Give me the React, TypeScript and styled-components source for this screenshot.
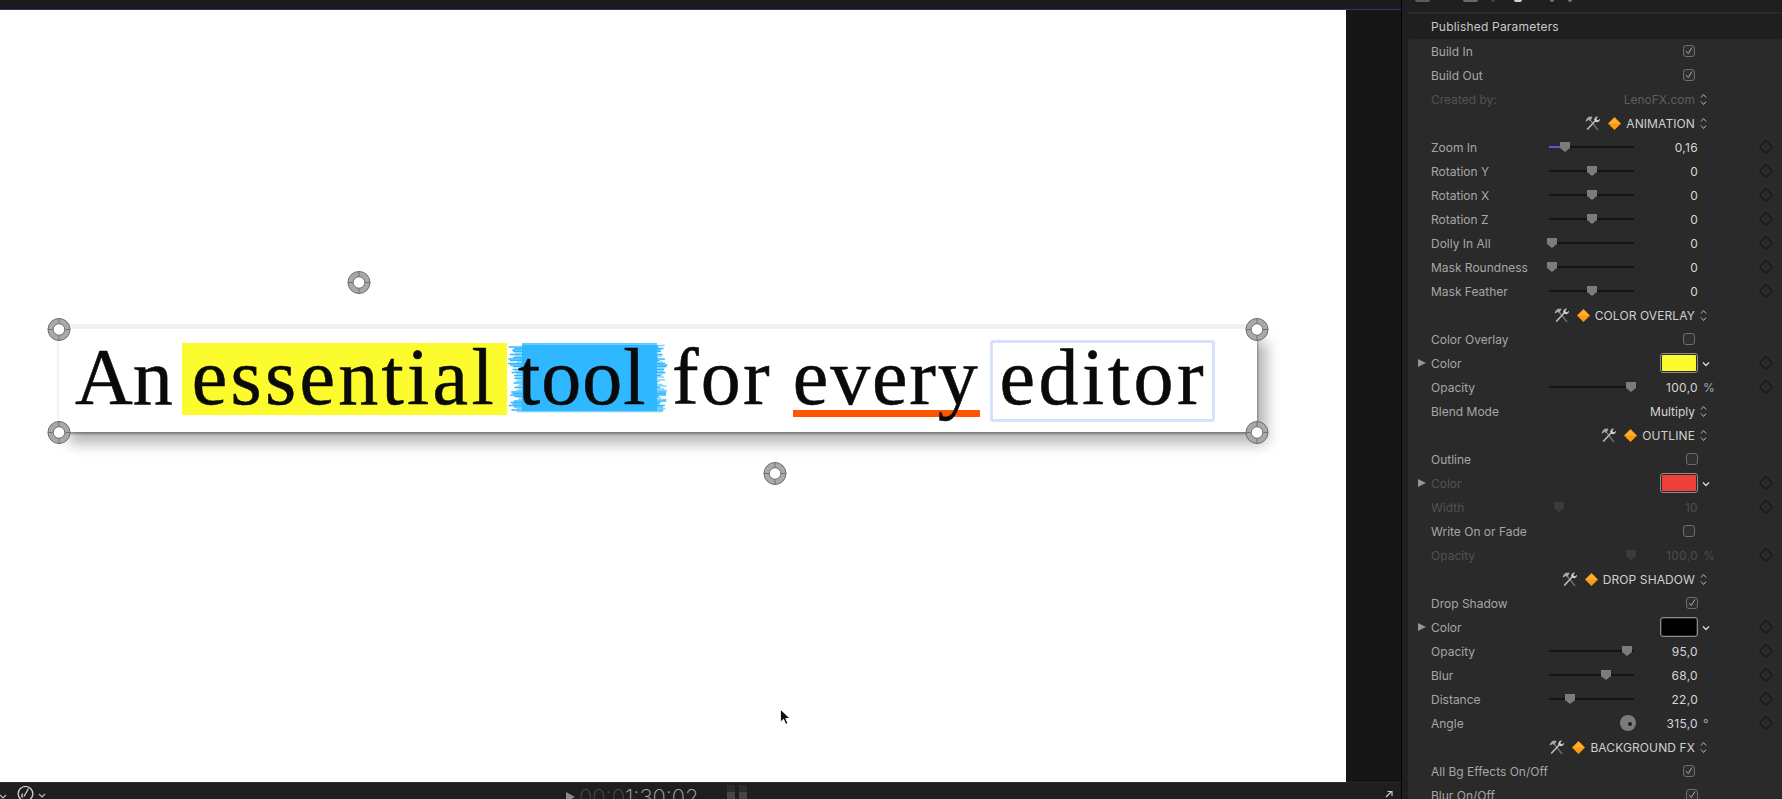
import React from "react";
import styled, { createGlobalStyle } from "styled-components";

const GlobalStyle = createGlobalStyle`
  html, body {
    margin: 0;
    padding: 0;
    background: #161616;
    overflow: hidden;
  }
`;

type RowData =
  | { kind: "check"; label: string; on: boolean; shifted?: boolean; dim?: boolean }
  | { kind: "popup"; label: string; value: string; dim?: boolean }
  | { kind: "section"; label: string }
  | { kind: "slider"; label: string; thumb: number; value: string; unit?: string; fill?: boolean; dim?: boolean; noTrack?: boolean }
  | { kind: "swatch"; label: string; color: string; dim?: boolean }
  | { kind: "angle"; label: string; value: string; unit: string };

const rows: RowData[] = [
  { kind: "check", label: "Build In", on: true },
  { kind: "check", label: "Build Out", on: true },
  { kind: "popup", label: "Created by:", value: "LenoFX.com", dim: true },
  { kind: "section", label: "ANIMATION" },
  { kind: "slider", label: "Zoom In", thumb: 16, value: "0,16", fill: true },
  { kind: "slider", label: "Rotation Y", thumb: 43, value: "0" },
  { kind: "slider", label: "Rotation X", thumb: 43, value: "0" },
  { kind: "slider", label: "Rotation Z", thumb: 43, value: "0" },
  { kind: "slider", label: "Dolly In All", thumb: 3, value: "0" },
  { kind: "slider", label: "Mask Roundness", thumb: 3, value: "0" },
  { kind: "slider", label: "Mask Feather", thumb: 43, value: "0" },
  { kind: "section", label: "COLOR OVERLAY" },
  { kind: "check", label: "Color Overlay", on: false },
  { kind: "swatch", label: "Color", color: "#fbfb2e" },
  { kind: "slider", label: "Opacity", thumb: 82, value: "100,0", unit: "%" },
  { kind: "popup", label: "Blend Mode", value: "Multiply" },
  { kind: "section", label: "OUTLINE" },
  { kind: "check", label: "Outline", on: false, shifted: true },
  { kind: "swatch", label: "Color", color: "#ee3f38", dim: true },
  { kind: "slider", label: "Width", thumb: 10, value: "10", dim: true, noTrack: true },
  { kind: "check", label: "Write On or Fade", on: false },
  { kind: "slider", label: "Opacity", thumb: 82, value: "100,0", unit: "%", dim: true, noTrack: true },
  { kind: "section", label: "DROP SHADOW" },
  { kind: "check", label: "Drop Shadow", on: true, shifted: true },
  { kind: "swatch", label: "Color", color: "#000000" },
  { kind: "slider", label: "Opacity", thumb: 78, value: "95,0" },
  { kind: "slider", label: "Blur", thumb: 57, value: "68,0" },
  { kind: "slider", label: "Distance", thumb: 21, value: "22,0" },
  { kind: "angle", label: "Angle", value: "315,0", unit: "°" },
  { kind: "section", label: "BACKGROUND FX" },
  { kind: "check", label: "All Bg Effects On/Off", on: true },
  { kind: "check", label: "Blur On/Off", on: true, shifted: true },
];

// horizontal bristle streaks that make up the paint stroke behind "tool"
const bristles = Array.from({ length: 46 }, (_, i) => {
  const a = Math.abs(Math.sin(i * 12.9898) * 43758.5453) % 1;
  const b = Math.abs(Math.sin(i * 78.233) * 12345.678) % 1;
  return {
    y: 1 + i * 1.5,
    from: i < 2 ? 14 + a * 20 : a * 11,
    to: i > 43 ? 158 - b * 4 : 149 + b * 11,
    soft: a > 0.6,
  };
});

const App = () => {
  return (
    <Page>
      <GlobalStyle />
      <Viewer>
        <TopStrip />
        <CanvasWrap>
          <Canvas>
            <TitleCard>
              <Word>An</Word>
              <Highlight>essential</Highlight>
              <Brushed>
                <BrushSvg viewBox="0 0 161 70">
                  {bristles.map((s) => (
                    <line
                      key={s.y}
                      x1={s.from}
                      x2={s.to}
                      y1={s.y}
                      y2={s.y}
                      stroke={s.soft ? "#7fd2ff" : "#2fb7ff"}
                      strokeWidth="1.6"
                    />
                  ))}
                  <rect x="14" y="2" width="135" height="66" fill="#2fb7ff" />
                </BrushSvg>
                <BrushText>tool</BrushText>
              </Brushed>
              <ForWord>for</ForWord>
              <Underlined>every</Underlined>
              <Boxed>editor</Boxed>
              <Handle $x={0} $y={0} />
              <Handle $x={1198} $y={0} />
              <Handle $x={0} $y={103} />
              <Handle $x={1198} $y={103} />
              <Handle $x={300} $y={-47} />
              <Handle $x={716} $y={144} />
            </TitleCard>
            <Cursor viewBox="0 0 14 20">
              <path d="M1.5 1v14l3.4-3 2.3 5.4 2.4-1-2.3-5.3h4.6z" fill="#111" stroke="#fff" strokeWidth="1" />
            </Cursor>
          </Canvas>
          <Gutter />
        </CanvasWrap>
        <BottomBar>
          <SmallIcon viewBox="0 0 8 8">
            <path d="M0 3l3 3 3-3" fill="none" stroke="#bbb" strokeWidth="1.2" />
          </SmallIcon>
          <Gauge viewBox="0 0 17 17">
            <path d="M4 15.5a7.3 7.3 0 1 1 9 0" fill="none" stroke="#cfcfcf" strokeWidth="1.3" />
            <path d="M7 12.5l4.5-8M5.5 9.5a3.5 3.5 0 0 0 0 4" fill="none" stroke="#cfcfcf" strokeWidth="1.3" />
          </Gauge>
          <SmallIcon viewBox="0 0 8 8">
            <path d="M1 2l3 3 3-3" fill="none" stroke="#bbb" strokeWidth="1.2" />
          </SmallIcon>
          <PlayMark />
          <Timecode>
            <span>00:0</span>1:30:02
          </Timecode>
          <Meter>
            <i />
            <i />
          </Meter>
          <Expand viewBox="0 0 10 10">
            <path d="M2 8l5-5M3.5 2.5H8V7" fill="none" stroke="#ccc" strokeWidth="1.2" />
          </Expand>
        </BottomBar>
      </Viewer>
      <Inspector>
        <Toolbar>
          <ToolStub $w={15} $ml={7} $color="#5c5c5c" />
          <ToolStub $w={15} $ml={33} $color="#6a6a6a" />
          <ToolStub $w={4} $ml={13} $color="#444" />
          <ToolStub $w={8} $ml={19} $color="#d0d0d0" />
          <ToolStub $w={4} $ml={28} $color="#777" />
          <ToolStub $w={4} $ml={14} $color="#777" />
        </Toolbar>
        <Title>Published Parameters</Title>
        <Params>
          {rows.map((row, i) => (
            <ParamRow key={i} row={row} />
          ))}
        </Params>
      </Inspector>
    </Page>
  );
};

const ParamRow = ({ row }: { row: RowData }) => {
  if (row.kind === "section") {
    return (
      <Row>
        <SectionHead>
          <ToolsIcon />
          <OrangeDiamond />
          <SectionName>{row.label}</SectionName>
        </SectionHead>
        <UnitCell>
          <UpDown />
        </UnitCell>
      </Row>
    );
  }

  const dim = "dim" in row && !!row.dim;
  return (
    <Row>
      {row.kind === "swatch" ? <Disclosure /> : <span />}
      <Label $dim={dim}>{row.label}</Label>
      {row.kind === "check" && (
        <CheckCell>
          <CheckBox $shifted={row.shifted}>
            {row.on && (
              <svg width="10" height="10" viewBox="0 0 10 10">
                <path d="M2.2 5.2l2 2.3 3.8-6" fill="none" stroke="#a9a9a9" strokeWidth="1" />
              </svg>
            )}
          </CheckBox>
        </CheckCell>
      )}
      {row.kind === "popup" && (
        <>
          <PopupValue $dim={dim}>{row.value}</PopupValue>
          <UnitCell>
            <UpDown />
          </UnitCell>
        </>
      )}
      {row.kind === "slider" && (
        <>
          <SliderCell>
            {!row.noTrack && <Track />}
            {row.fill && <TrackFill style={{ width: row.thumb - 5 }} />}
            <Thumb $dim={dim} style={{ left: row.thumb - 5 }} />
          </SliderCell>
          <Value $dim={dim}>{row.value}</Value>
          <UnitCell $dim={dim}>{row.unit}</UnitCell>
          <KeyDiamond />
        </>
      )}
      {row.kind === "swatch" && (
        <>
          <SwatchCell>
            <Swatch $color={row.color} />
          </SwatchCell>
          <UnitCell>
            <ChevronSvg width="8" height="7" viewBox="0 0 8 7">
              <path d="M1 1.5l3 3 3-3" fill="none" stroke="#d8d8d8" strokeWidth="1.4" />
            </ChevronSvg>
          </UnitCell>
          <KeyDiamond />
        </>
      )}
      {row.kind === "angle" && (
        <>
          <DialCell>
            <Dial />
          </DialCell>
          <Value>{row.value}</Value>
          <UnitCell>{row.unit}</UnitCell>
          <KeyDiamond />
        </>
      )}
    </Row>
  );
};

const UpDown = () => (
  <UpDownSvg width="7" height="13" viewBox="0 0 7 13">
    <path d="M1 4.5l2.5-3 2.5 3M1 8.5l2.5 3 2.5-3" fill="none" stroke="#b5b5b5" strokeWidth="1" />
  </UpDownSvg>
);

const ToolsIcon = () => (
  <ToolsSvg width="15" height="15" viewBox="0 0 15 15">
    <path d="M4 2.5l9 11.5" stroke="#6f6f6f" strokeWidth="1.4" />
    <path d="M0.5 4.5L3.2 1l3.6-.6.7 1L5 5 3.4 3.8 1.8 5.6z" fill="#a8a8a8" />
    <path d="M10.8 4.2L2.2 13.6" stroke="#c2c2c2" strokeWidth="1.5" />
    <path d="M9.3 4.5c-.4-2.4 1.3-4 3.9-3.9l-1.8 1.8.5 1.5 1.5.4 1.7-1.7c.2 2.4-1.7 4-4 3.5z" fill="#d2d2d2" />
  </ToolsSvg>
);

const OrangeDiamond = () => (
  <svg width="13" height="13" viewBox="0 0 12 12">
    <path d="M6 0l6 6-6 6-6-6z" fill="#fd9a14" />
    <path d="M6 1L11 6H1z" fill="#ffb02e" />
  </svg>
);

const HandleRing = ({ className }: { className?: string }) => (
  <svg className={className} viewBox="0 0 25 25">
    <circle cx="12.5" cy="12.5" r="11.5" fill="#a9a9a9" stroke="#6a6a6a" strokeWidth="1" />
    <path d="M12.5 1v5M12.5 19v5M1 12.5h5M19 12.5h5" stroke="#6f6f6f" strokeWidth="1" />
    <circle cx="12.5" cy="12.5" r="6" fill="#ffffff" stroke="#6a6a6a" strokeWidth="1" />
  </svg>
);

const Page = styled.div`
  display: flex;
  width: 1782px;
  height: 799px;
  overflow: hidden;
  font-family: Inter, "Liberation Sans", sans-serif;
`;

const Viewer = styled.div`
  width: 1401px;
  display: flex;
  flex-direction: column;
  background: #161616;
`;

const TopStrip = styled.div`
  height: 9px;
  background: #1a1a1a;
  border-bottom: 1px solid #34347e;
`;

const CanvasWrap = styled.div`
  flex: 1;
  display: flex;
`;

const Canvas = styled.div`
  position: relative;
  width: 1346px;
  box-sizing: border-box;
  padding: 319px 0 0 59px;
  background: #ffffff;
`;

const Gutter = styled.div`
  flex: 1;
  background: #161616;
`;

const TitleCard = styled.div`
  position: relative;
  isolation: isolate;
  display: flex;
  align-items: baseline;
  box-sizing: border-box;
  width: 1198px;
  height: 103px;
  padding: 11px 0 0 16px;
  background: #ffffff;
  font-family: "Liberation Serif", serif;
  font-size: 80px;
  line-height: 68px;
  color: #0a0a0a;
  -webkit-text-stroke: 0.5px #0a0a0a;
  box-shadow:
    0 -5px 0 #f1f1f1,
    -2px 0 0 #f3f3f3,
    10px 12px 13px rgba(0, 0, 0, 0.28),
    1px 2px 2px rgba(0, 0, 0, 0.35);
`;

const Word = styled.span``;

const Highlight = styled.span`
  margin-left: 9px;
  padding: 0 10px 4px 10px;
  letter-spacing: 3.3px;
  background: #fbfb2e;
`;

const Brushed = styled.span`
  position: relative;
  width: 161px;
  box-sizing: border-box;
  margin-left: 1px;
  padding-left: 10px;
  letter-spacing: 1px;
`;

const BrushSvg = styled.svg`
  position: absolute;
  left: 0;
  top: 0;
  width: 161px;
  height: 70px;
  z-index: -1;
`;

const BrushText = styled.span``;

const ForWord = styled.span`
  margin-left: 3px;
  letter-spacing: 2.2px;
`;

const Underlined = styled.span`
  position: relative;
  margin-left: 21px;
  letter-spacing: 1.8px;

  &::after {
    content: "";
    position: absolute;
    z-index: -1;
    left: 0;
    right: 0;
    top: 67px;
    height: 7px;
    background: #ff5400;
  }
`;

const Boxed = styled.span`
  margin-left: 10px;
  padding: 0 5px 8px 7px;
  letter-spacing: 3.5px;
  border: 3px solid #d6e2fb;
  border-radius: 3px;
`;

const Handle = styled(HandleRing)<{ $x: number; $y: number }>`
  position: absolute;
  left: ${(p) => p.$x - 12}px;
  top: ${(p) => p.$y - 12}px;
  width: 24px;
  height: 25px;
`;

const Cursor = styled.svg`
  position: absolute;
  left: 779px;
  top: 698px;
  width: 13px;
  height: 19px;
`;

const BottomBar = styled.div`
  position: relative;
  display: flex;
  align-items: flex-start;
  height: 17px;
  overflow: hidden;
  background: #1e1e1e;
  border-top: 1px solid #2a2a2a;
  box-sizing: border-box;
`;

const SmallIcon = styled.svg`
  width: 8px;
  height: 8px;
  margin-top: 9px;
  flex: none;
`;

const Gauge = styled.svg`
  width: 17px;
  height: 17px;
  margin: 1px 4px 0 9px;
  flex: none;
`;

const PlayMark = styled.i`
  margin: 9px 0 0 520px;
  flex: none;
  border-left: 9px solid #8a8a8a;
  border-top: 5px solid transparent;
  border-bottom: 5px solid transparent;
`;

const Timecode = styled.div`
  margin: 2px 0 0 4px;
  font-size: 22px;
  font-weight: 200;
  line-height: 24px;
  color: #a8a8a8;
  white-space: nowrap;

  span {
    color: #4d4d4d;
  }
`;

const Meter = styled.div`
  display: flex;
  gap: 4px;
  margin: 2px 0 0 28px;

  i {
    width: 8px;
    height: 15px;
    background: linear-gradient(#2c2c2c 0 45%, #454545 45%);
  }
`;

const Expand = styled.svg`
  position: absolute;
  left: 1384px;
  top: 6px;
  width: 10px;
  height: 10px;
`;

const Inspector = styled.div`
  flex: 1;
  border-left: 1px solid #050505;
  background: #1f1f1f;
  padding-left: 6px;
`;

const Toolbar = styled.div`
  display: flex;
  align-items: flex-start;
  height: 12px;
  border-bottom: 2px solid #2a2a2a;
`;

const ToolStub = styled.i<{ $w: number; $ml: number; $color: string }>`
  width: ${(p) => p.$w}px;
  height: 2px;
  margin-left: ${(p) => p.$ml}px;
  background: ${(p) => p.$color};
  border-radius: 0 0 2px 2px;
`;

const Title = styled.div`
  height: 25px;
  padding-left: 23px;
  font-size: 12px;
  line-height: 25px;
  letter-spacing: 0.2px;
  color: #c9c9c9;
`;

const Params = styled.div`
  background: #2a2a2a;
  border-radius: 4px 0 0 0;
`;

const Row = styled.div`
  display: grid;
  grid-template-columns: 23px 118px 85px 64px 58px 20px;
  align-items: center;
  height: 24px;
`;

const Label = styled.div<{ $dim?: boolean }>`
  font-size: 12px;
  color: ${(p) => (p.$dim ? "#525252" : "#a6a6a6")};
  white-space: nowrap;
`;

const SectionHead = styled.div`
  grid-column: 1 / span 4;
  display: flex;
  align-items: center;
  justify-content: flex-end;
  gap: 5px;
  padding-right: 3px;
`;

const ToolsSvg = styled.svg`
  margin-right: 3px;
`;

const SectionName = styled.span`
  font-size: 12px;
  letter-spacing: 0.1px;
  color: #d0d0d0;
`;

const UnitCell = styled.div<{ $dim?: boolean }>`
  display: flex;
  align-items: center;
  height: 24px;
  padding-left: 5px;
  font-size: 12px;
  color: ${(p) => (p.$dim ? "#4c4c4c" : "#a6a6a6")};
`;

const UpDownSvg = styled.svg`
  margin-left: -3px;
`;

const ChevronSvg = styled.svg`
  margin-left: -1px;
  margin-top: 2px;
`;

const CheckCell = styled.div`
  grid-column: 3 / span 2;
  display: flex;
  justify-content: flex-end;
`;

const CheckBox = styled.span<{ $shifted?: boolean }>`
  display: flex;
  align-items: center;
  justify-content: center;
  width: 12px;
  height: 12px;
  margin-right: ${(p) => (p.$shifted ? 0 : 3)}px;
  border: 1px solid #6d6d6d;
  border-radius: 3px;
  box-sizing: border-box;
  background: #303030;
`;

const PopupValue = styled.div<{ $dim?: boolean }>`
  grid-column: 3 / span 2;
  padding-right: 3px;
  text-align: right;
  font-size: 12px;
  color: ${(p) => (p.$dim ? "#5e5e5e" : "#d6d6d6")};
`;

const SliderCell = styled.div`
  position: relative;
  height: 24px;
`;

const Track = styled.i`
  position: absolute;
  left: 0;
  right: 0;
  top: 11px;
  height: 2px;
  background: #141414;
  border-radius: 1px;
`;

const TrackFill = styled.i`
  position: absolute;
  left: 0;
  top: 11px;
  height: 2px;
  background: #5a5ad6;
`;

const Thumb = styled.i<{ $dim?: boolean }>`
  position: absolute;
  top: 7px;
  width: 10px;
  height: 10px;
  background: ${(p) => (p.$dim ? "#3b3b3b" : "#7c7c7c")};
  clip-path: polygon(0 0, 100% 0, 100% 60%, 50% 100%, 0 60%);
`;

const Value = styled.div<{ $dim?: boolean }>`
  text-align: right;
  font-size: 12px;
  letter-spacing: 0.3px;
  color: ${(p) => (p.$dim ? "#4c4c4c" : "#d6d6d6")};
`;

const KeyDiamond = styled.i`
  grid-column: 6;
  justify-self: center;
  width: 8px;
  height: 8px;
  border: 1px solid #141414;
  transform: rotate(45deg);
`;

const Disclosure = styled.i`
  justify-self: start;
  margin-left: 10px;
  border-left: 8px solid #949494;
  border-top: 4.5px solid transparent;
  border-bottom: 4.5px solid transparent;
`;

const SwatchCell = styled.div`
  grid-column: 3 / span 2;
  display: flex;
  justify-content: flex-end;
`;

const Swatch = styled.span<{ $color: string }>`
  width: 38px;
  height: 20px;
  box-sizing: border-box;
  border: 2px solid #2a2a2a;
  outline: 1px solid #8c8c8c;
  outline-offset: -1px;
  border-radius: 3px;
  background: ${(p) => p.$color};
`;

const DialCell = styled.div`
  display: flex;
  justify-content: flex-end;
  margin-right: -2px;
`;

const Dial = styled.span`
  display: flex;
  align-items: center;
  justify-content: center;
  width: 16px;
  height: 16px;
  border-radius: 50%;
  background: #7b7b7b;

  &::after {
    content: "";
    width: 4px;
    height: 4px;
    margin: 2px 0 0 3px;
    border-radius: 50%;
    background: #1e1e1e;
  }
`;

export default App;
